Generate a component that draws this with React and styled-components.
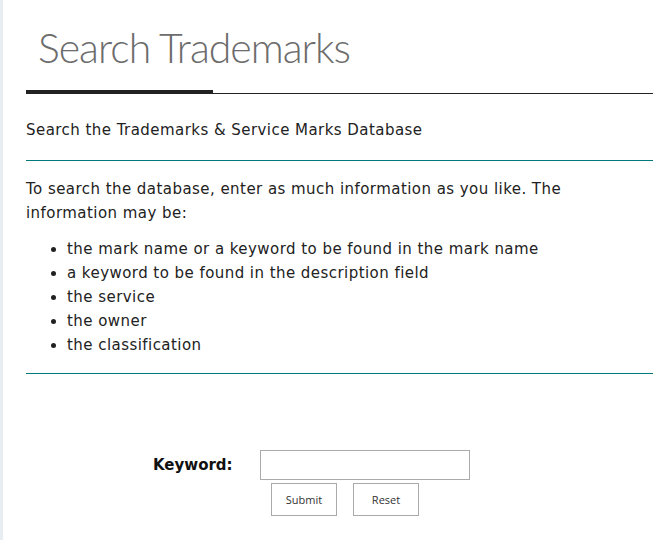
import styled, { createGlobalStyle } from "styled-components";

const GlobalStyle = createGlobalStyle`
  html, body {
    margin: 0;
    padding: 0;
    background: #ffffff;
  }
`;

const Page = styled.div`
  display: flex;
  min-height: 540px;
  background: white;
`;

const SideStrip = styled.div`
  width: 3px;
  background: #e8edf2;
  flex-shrink: 0;
`;

const Content = styled.div`
  flex: 1;
  padding: 0 15px 0 23px;
`;

const Header = styled.div`
  position: relative;
  border-bottom: 1px solid #222;
  padding: 23px 0 20px 12px;

  &::after {
    content: "";
    position: absolute;
    left: 0;
    bottom: -1px;
    width: 187px;
    height: 4px;
    background: #222;
  }
`;

const Title = styled.h1`
  margin: 0;
  font-family: Lato, sans-serif;
  font-weight: 300;
  font-size: 41px;
  letter-spacing: -1px;
  line-height: 50px;
  color: #6c6c6c;
`;

const Section = styled.div`
  border-bottom: 1px solid #00797b;
  padding: ${(p) => p.pad};
`;

const Text = styled.p`
  margin: 0;
  font-family: "DejaVu Sans", sans-serif;
  font-size: 15px;
  letter-spacing: 0.45px;
  line-height: 24px;
  color: #222;
`;

const List = styled.ul`
  margin: 12px 0 0;
  padding-left: 41px;
  font-family: "DejaVu Sans", sans-serif;
  font-size: 15px;
  letter-spacing: 0.45px;
  line-height: 24px;
  color: #222;
`;

const Form = styled.div`
  display: grid;
  grid-template-columns: 107px 210px;
  margin: 76px 0 0 127px;
`;

const Label = styled.label`
  font-family: "DejaVu Sans", sans-serif;
  font-weight: 700;
  font-size: 15px;
  color: #111;
  align-self: center;
`;

const Input = styled.input`
  box-sizing: border-box;
  width: 210px;
  height: 30px;
  border: 1px solid #aaa;
  margin: 0;
`;

const Buttons = styled.div`
  grid-column: 2;
  display: flex;
  gap: 16px;
  padding: 3px 0 0 11px;
`;

const Button = styled.button`
  box-sizing: border-box;
  width: 66px;
  height: 33px;
  background: #fff;
  border: 1px solid #aaa;
  font-family: "Open Sans", sans-serif;
  font-size: 11px;
  color: #333;
  cursor: pointer;
`;

export default function App() {
  return (
    <>
      <GlobalStyle />
      <Page>
        <SideStrip />
        <Content>
          <Header>
            <Title>Search Trademarks</Title>
          </Header>
          <Section pad="24px 0 18px">
            <Text>Search the Trademarks &amp; Service Marks Database</Text>
          </Section>
          <Section pad="16px 0 16px">
            <Text>
              To search the database, enter as much information as you like. The
              information may be:
            </Text>
            <List>
              <li>the mark name or a keyword to be found in the mark name</li>
              <li>a keyword to be found in the description field</li>
              <li>the service</li>
              <li>the owner</li>
              <li>the classification</li>
            </List>
          </Section>
          <Form>
            <Label>Keyword:</Label>
            <Input type="text" />
            <Buttons>
              <Button>Submit</Button>
              <Button>Reset</Button>
            </Buttons>
          </Form>
        </Content>
      </Page>
    </>
  );
}
